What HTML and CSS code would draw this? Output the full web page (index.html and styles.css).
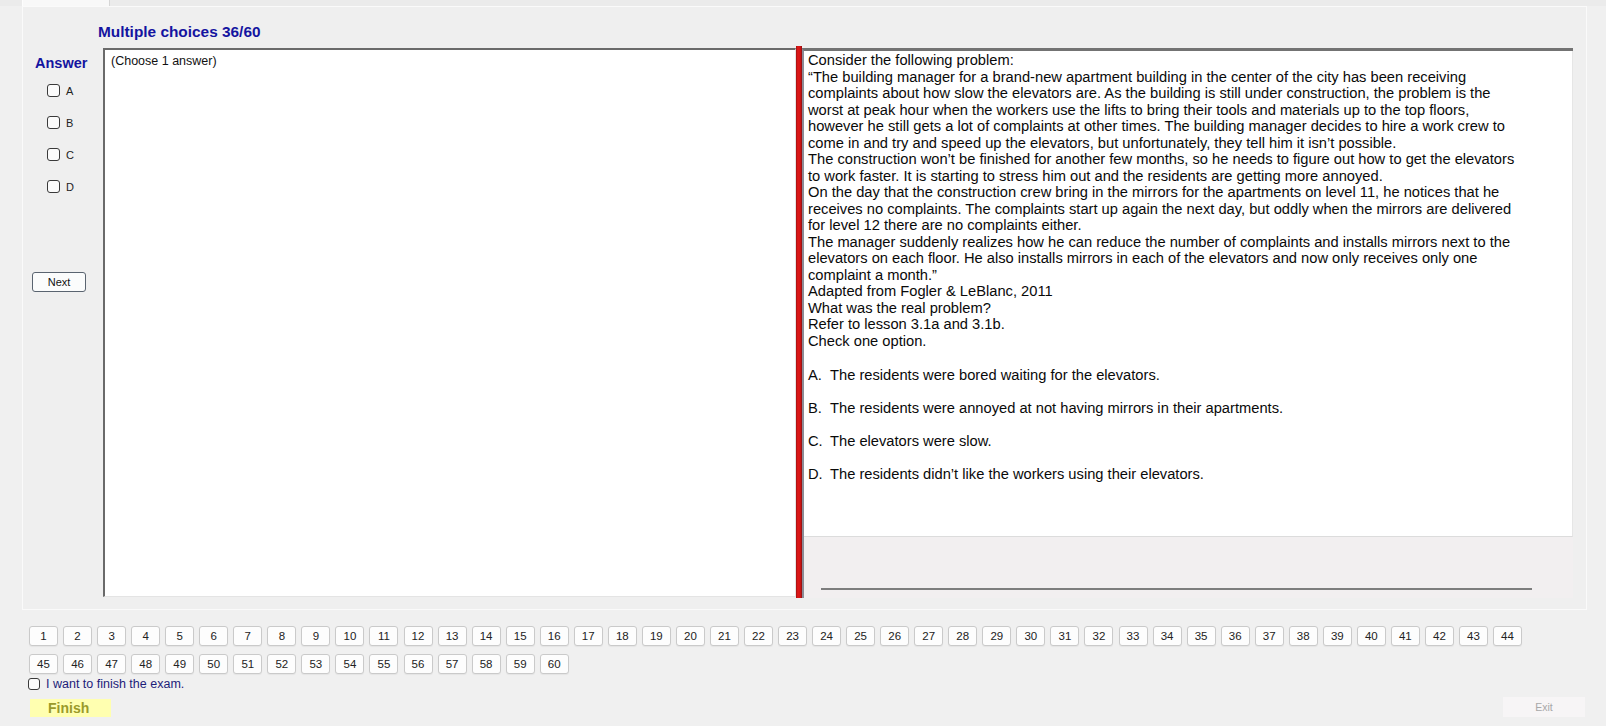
FILE: index.html
```html
<!DOCTYPE html>
<html>
<head>
<meta charset="utf-8">
<link rel="stylesheet" href="styles.css">
</head>
<body>
<div class="tabstrip"><div class="tab"></div></div>
<div class="main">
  <div class="title">Multiple choices 36/60</div>
  <div class="content">
    <div class="answer-col">
      <div class="answer-label">Answer</div>
      <label class="opt"><span class="box"></span>A</label>
      <label class="opt"><span class="box"></span>B</label>
      <label class="opt"><span class="box"></span>C</label>
      <label class="opt"><span class="box"></span>D</label>
      <button class="next">Next</button>
    </div>
    <div class="answer-box">(Choose 1 answer)</div>
    <div class="splitter"></div>
    <div class="question">
      <div class="question-text">
        <div class="ln">Consider the following problem:</div>
        <div class="ln">“The building manager for a brand-new apartment building in the center of the city has been receiving</div>
        <div class="ln">complaints about how slow the elevators are. As the building is still under construction, the problem is the</div>
        <div class="ln">worst at peak hour when the workers use the lifts to bring their tools and materials up to the top floors,</div>
        <div class="ln">however he still gets a lot of complaints at other times. The building manager decides to hire a work crew to</div>
        <div class="ln">come in and try and speed up the elevators, but unfortunately, they tell him it isn’t possible.</div>
        <div class="ln">The construction won’t be finished for another few months, so he needs to figure out how to get the elevators</div>
        <div class="ln">to work faster. It is starting to stress him out and the residents are getting more annoyed.</div>
        <div class="ln">On the day that the construction crew bring in the mirrors for the apartments on level 11, he notices that he</div>
        <div class="ln">receives no complaints. The complaints start up again the next day, but oddly when the mirrors are delivered</div>
        <div class="ln">for level 12 there are no complaints either.</div>
        <div class="ln">The manager suddenly realizes how he can reduce the number of complaints and installs mirrors next to the</div>
        <div class="ln">elevators on each floor. He also installs mirrors in each of the elevators and now only receives only one</div>
        <div class="ln">complaint a month.”</div>
        <div class="ln">Adapted from Fogler &amp; LeBlanc, 2011</div>
        <div class="ln">What was the real problem?</div>
        <div class="ln">Refer to lesson 3.1a and 3.1b.</div>
        <div class="ln">Check one option.</div>
        <div class="choice first"><span class="letter">A.</span>The residents were bored waiting for the elevators.</div>
        <div class="choice"><span class="letter">B.</span>The residents were annoyed at not having mirrors in their apartments.</div>
        <div class="choice"><span class="letter">C.</span>The elevators were slow.</div>
        <div class="choice"><span class="letter">D.</span>The residents didn’t like the workers using their elevators.</div>
      </div>
      <div class="question-foot">
        <div class="hscroll"></div>
      </div>
    </div>
  </div>
</div>
<div class="bottom">
  <div class="numbers">
    <button class="num">1</button><button class="num">2</button><button class="num">3</button><button class="num">4</button><button class="num">5</button><button class="num">6</button><button class="num">7</button><button class="num">8</button><button class="num">9</button><button class="num">10</button>
    <button class="num">11</button><button class="num">12</button><button class="num">13</button><button class="num">14</button><button class="num">15</button><button class="num">16</button><button class="num">17</button><button class="num">18</button><button class="num">19</button><button class="num">20</button>
    <button class="num">21</button><button class="num">22</button><button class="num">23</button><button class="num">24</button><button class="num">25</button><button class="num">26</button><button class="num">27</button><button class="num">28</button><button class="num">29</button><button class="num">30</button>
    <button class="num">31</button><button class="num">32</button><button class="num">33</button><button class="num">34</button><button class="num">35</button><button class="num">36</button><button class="num">37</button><button class="num">38</button><button class="num">39</button><button class="num">40</button>
    <button class="num">41</button><button class="num">42</button><button class="num">43</button><button class="num">44</button><button class="num">45</button><button class="num">46</button><button class="num">47</button><button class="num">48</button><button class="num">49</button><button class="num">50</button>
    <button class="num">51</button><button class="num">52</button><button class="num">53</button><button class="num">54</button><button class="num">55</button><button class="num">56</button><button class="num">57</button><button class="num">58</button><button class="num">59</button><button class="num">60</button>
  </div>
  <label class="finish-check"><span class="box"></span>I want to finish the exam.</label>
  <div class="actions">
    <span class="finish">Finish</span>
    <span class="exit">Exit</span>
  </div>
</div>
</body>
</html>
```
FILE: styles.css
```css
* { box-sizing: border-box; }
html, body {
  margin: 0;
  padding: 0;
}
body {
  width: 1606px;
  height: 726px;
  overflow: hidden;
  background: #f0f0f0;
  font-family: "Liberation Sans", Arial, sans-serif;
  color: #111;
}
.tabstrip {
  height: 6px;
  background: #ebebeb;
  display: flex;
}
.tab {
  margin-left: 22px;
  width: 88px;
  background: #f8f8f8;
  border-left: 1px solid #fdfdfd;
  border-right: 1px solid #d6d6d6;
}
.main {
  margin-left: 22px;
  width: 1565px;
  height: 604px;
  border: 1px solid #fafafa;
  background: #efefef;
  padding-top: 16px;
}
.title {
  padding-left: 75px;
  font-size: 15.4px;
  line-height: 18px;
  font-weight: bold;
  color: #1414a0;
  height: 23px;
}
.content {
  display: flex;
  height: 552px;
}
.answer-col {
  width: 80px;
  display: flex;
  flex-direction: column;
  padding-top: 9px;
}
.answer-label {
  padding-left: 12px;
  font-size: 14.5px;
  line-height: 16px;
  font-weight: bold;
  color: #1414a0;
  margin-bottom: 13px;
}
.opt {
  display: flex;
  align-items: center;
  height: 13px;
  margin-left: 24px;
  margin-bottom: 19px;
  font-size: 11px;
  color: #222;
}
.box {
  display: inline-block;
  width: 13px;
  height: 13px;
  border: 1px solid #3a3a3a;
  border-radius: 3px;
  background: #fbfbfb;
  margin-right: 6px;
  flex: none;
}
.next {
  margin-top: 60px;
  margin-left: 9px;
  width: 54px;
  height: 20px;
  padding: 0;
  border: 1px solid #5a6470;
  border-radius: 3px;
  background: #fbfcfc;
  font-family: "Liberation Sans", Arial, sans-serif;
  font-size: 11px;
  color: #111;
}
.answer-box {
  margin-top: 2px;
  width: 693px;
  height: 549px;
  background: #fff;
  border-top: 2px solid #6a6a6a;
  border-left: 2px solid #6a6a6a;
  border-right: 1px solid #e4e4e4;
  border-bottom: 1px solid #e4e4e4;
  padding: 4px 6px;
  font-size: 12.5px;
  line-height: 15px;
  color: #111;
}
.splitter {
  width: 6px;
  height: 552px;
  background: linear-gradient(to right, #a01010, #e01818 30%, #d41414 70%, #8a1010);
}
.question {
  margin-top: 2px;
  width: 771px;
  height: 550px;
  display: flex;
  flex-direction: column;
  border-top: 3px solid #737373;
  border-left: 2px solid #8c8c96;
  background: #f2eff0;
}
.question-text {
  height: 486px;
  background: #fff;
  border-bottom: 1px solid #dcdcdc;
  border-right: 1px solid #e6e6e6;
  padding: 1px 0 0 4px;
  font-size: 14.7px;
  line-height: 16.5px;
  color: #0a0a0a;
}
.ln {
  white-space: nowrap;
}
.choice {
  white-space: nowrap;
  margin-top: 16.5px;
}
.choice.first {
  margin-top: 18px;
}
.letter {
  display: inline-block;
  width: 22px;
}
.question-foot {
  flex: 1;
  padding-top: 51px;
  padding-left: 17px;
}
.hscroll {
  width: 711px;
  height: 2px;
  background: #7d7d7d;
}
.bottom {
  padding-top: 16px;
  height: 116px;
  display: flex;
  flex-direction: column;
}
.numbers {
  margin-left: 29px;
  width: 1500px;
  display: flex;
  flex-wrap: wrap;
  column-gap: 5.05px;
  row-gap: 8px;
}
.num {
  width: 29px;
  height: 20px;
  padding: 0;
  border: 1px solid #cacaca;
  border-radius: 3px;
  background: #fdfdfd;
  font-family: "Liberation Sans", Arial, sans-serif;
  font-size: 11.5px;
  color: #222;
  box-shadow: 0 1px 1px rgba(0,0,0,0.05);
}
.finish-check {
  display: flex;
  align-items: center;
  margin-top: 3px;
  margin-left: 28px;
  height: 14px;
  font-size: 12.5px;
  color: #1d1d7a;
}
.finish-check .box {
  width: 12px;
  height: 12px;
  margin-right: 6px;
}
.actions {
  display: flex;
  justify-content: space-between;
  align-items: center;
  margin-top: 6px;
  padding-left: 30px;
  padding-right: 21px;
}
.finish {
  width: 81px;
  height: 18px;
  background: #ffffb0;
  color: #9a9a2a;
  font-weight: bold;
  font-size: 14px;
  line-height: 18px;
  padding-left: 18px;
  margin-top: 2px;
}
.exit {
  width: 82px;
  height: 20px;
  background: #f7f5f6;
  color: #a8a8a8;
  font-size: 10.5px;
  line-height: 20px;
  text-align: center;
}
```
